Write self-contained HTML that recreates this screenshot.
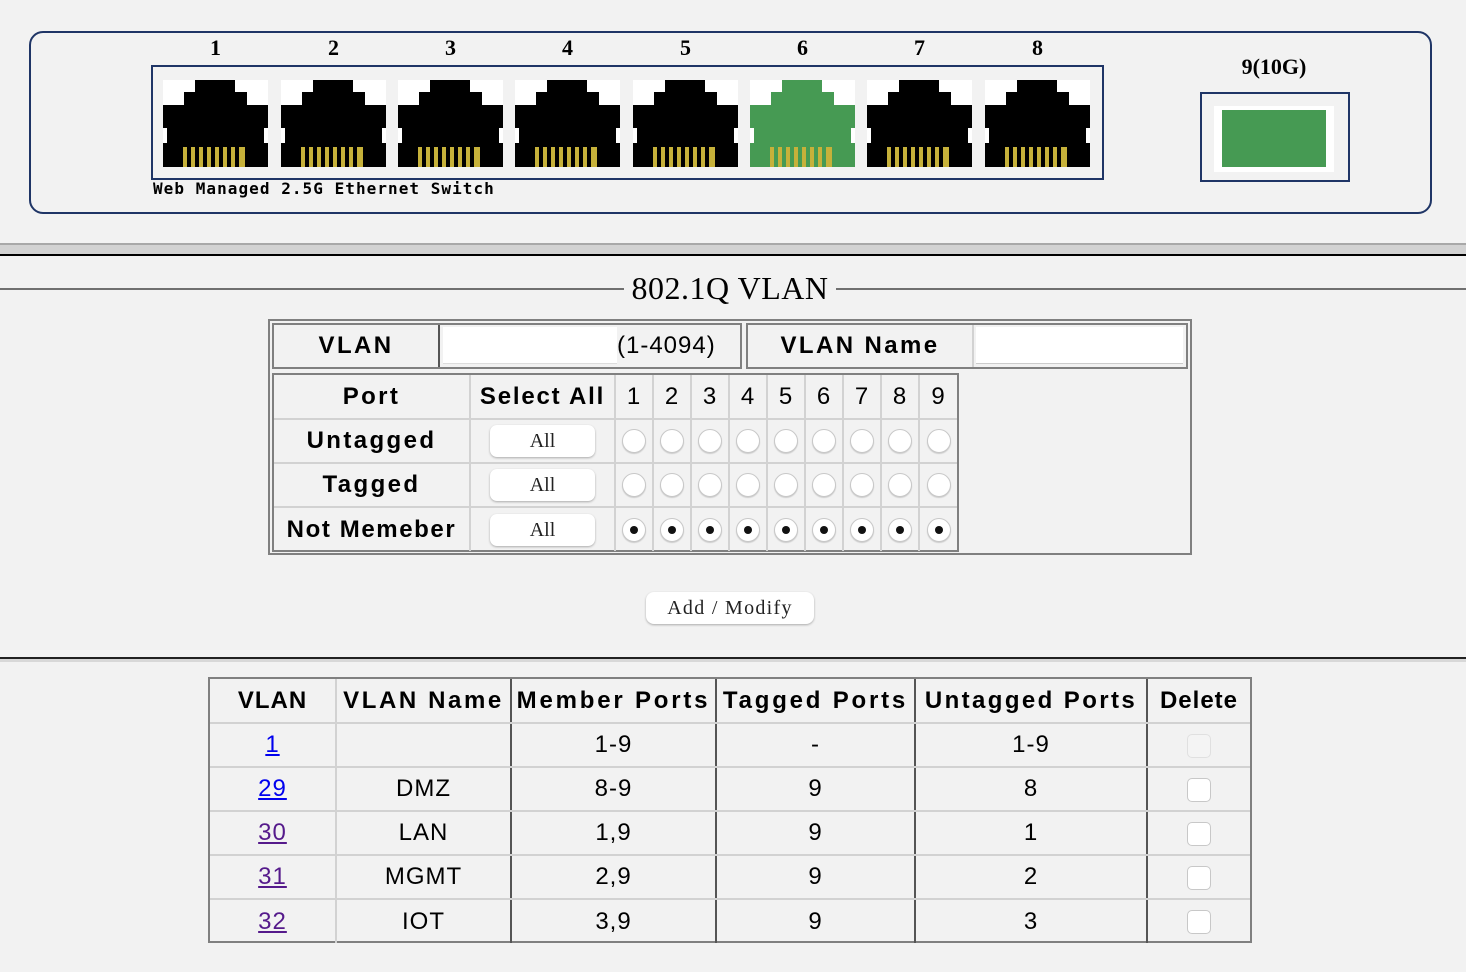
<!DOCTYPE html>
<html><head><meta charset="utf-8"><style>
*{margin:0;padding:0;box-sizing:border-box}
body{width:1466px;height:972px;background:#f2f2f2;position:relative;overflow:hidden;font-family:"Liberation Sans",sans-serif;color:#000}
.a{position:absolute}
.num{position:absolute;top:35px;width:105px;text-align:center;font:bold 22px "Liberation Serif",serif}
.jack{position:absolute;top:80px;width:105px;height:87px}
.b{font-weight:bold;font-size:24px;letter-spacing:2.4px;text-align:center}
.r{font-size:24px;text-align:center;letter-spacing:1px}
table{border-collapse:collapse;table-layout:fixed;border:hidden}
td{text-align:center;padding:0}
.g td{border:2px solid #d2d2d2;height:44px}
.rad{display:inline-block;width:24px;height:24px;border-radius:50%;background:#fff;border:1px solid #c8c8c8;box-shadow:0 1px 1px #ccc;vertical-align:middle;position:relative}
.rad.on::after{content:"";position:absolute;left:7px;top:7px;width:8px;height:8px;border-radius:50%;background:#111}
.btn{display:inline-block;width:105px;height:32px;background:#fff;border-radius:7px;box-shadow:0 1px 2px #aaa;font:20px "Liberation Serif",serif;line-height:32px;color:#222}
.t td{border:2px solid #d2d2d2;height:44px;font-size:24px;letter-spacing:1px}
.t td.dr{border-right:2px solid #555}
a{color:#0000ee}
a.v{color:#551a8b}
.cb{display:inline-block;width:24px;height:24px;border-radius:5px;background:#fff;border:1px solid #c8c8c8;vertical-align:middle}
</style></head><body>
<div class="a" style="left:29px;top:31px;width:1403px;height:183px;border:2px solid #1f3566;border-radius:14px"></div>
<div class="a" style="left:151px;top:65px;width:953px;height:115px;border:2px solid #1f3566"></div>
<svg width="0" height="0" style="position:absolute"><defs>
<g id="pins" fill="#c6b13a"><rect x="20" y="67" width="4" height="20"/><rect x="28" y="67" width="4" height="20"/><rect x="36" y="67" width="4" height="20"/><rect x="44" y="67" width="4" height="20"/><rect x="52" y="67" width="4" height="20"/><rect x="60" y="67" width="4" height="20"/><rect x="68" y="67" width="4" height="20"/><rect x="76" y="67" width="6" height="20"/></g>
</defs></svg>
<div class="num" style="left:163px">1</div><div class="num" style="left:281px">2</div><div class="num" style="left:398px">3</div><div class="num" style="left:515px">4</div><div class="num" style="left:633px">5</div><div class="num" style="left:750px">6</div><div class="num" style="left:867px">7</div><div class="num" style="left:985px">8</div>
<svg class="jack" style="left:163px" viewBox="0 0 105 87"><rect width="105" height="87" fill="#fff"/><path d="M32 0H72V12H84V25H105V48H101V63H105V87H0V63H4V48H0V25H21V12H32Z" fill="#000"/><use href="#pins"/></svg>
<svg class="jack" style="left:281px" viewBox="0 0 105 87"><rect width="105" height="87" fill="#fff"/><path d="M32 0H72V12H84V25H105V48H101V63H105V87H0V63H4V48H0V25H21V12H32Z" fill="#000"/><use href="#pins"/></svg>
<svg class="jack" style="left:398px" viewBox="0 0 105 87"><rect width="105" height="87" fill="#fff"/><path d="M32 0H72V12H84V25H105V48H101V63H105V87H0V63H4V48H0V25H21V12H32Z" fill="#000"/><use href="#pins"/></svg>
<svg class="jack" style="left:515px" viewBox="0 0 105 87"><rect width="105" height="87" fill="#fff"/><path d="M32 0H72V12H84V25H105V48H101V63H105V87H0V63H4V48H0V25H21V12H32Z" fill="#000"/><use href="#pins"/></svg>
<svg class="jack" style="left:633px" viewBox="0 0 105 87"><rect width="105" height="87" fill="#fff"/><path d="M32 0H72V12H84V25H105V48H101V63H105V87H0V63H4V48H0V25H21V12H32Z" fill="#000"/><use href="#pins"/></svg>
<svg class="jack" style="left:750px" viewBox="0 0 105 87"><rect width="105" height="87" fill="#fff"/><path d="M32 0H72V12H84V25H105V48H101V63H105V87H0V63H4V48H0V25H21V12H32Z" fill="#469a53"/><use href="#pins"/></svg>
<svg class="jack" style="left:867px" viewBox="0 0 105 87"><rect width="105" height="87" fill="#fff"/><path d="M32 0H72V12H84V25H105V48H101V63H105V87H0V63H4V48H0V25H21V12H32Z" fill="#000"/><use href="#pins"/></svg>
<svg class="jack" style="left:985px" viewBox="0 0 105 87"><rect width="105" height="87" fill="#fff"/><path d="M32 0H72V12H84V25H105V48H101V63H105V87H0V63H4V48H0V25H21V12H32Z" fill="#000"/><use href="#pins"/></svg>
<div class="a" style="left:153px;top:179px;font:bold 16px 'DejaVu Sans Mono','Liberation Mono',monospace;letter-spacing:1.05px">Web Managed 2.5G Ethernet Switch</div>
<div class="a" style="left:1200px;top:54px;width:148px;text-align:center;font:bold 22px 'Liberation Serif',serif">9(10G)</div>
<div class="a" style="left:1200px;top:92px;width:150px;height:90px;border:2px solid #1f3566"></div>
<div class="a" style="left:1214px;top:106px;width:120px;height:66px;background:#fff"></div>
<div class="a" style="left:1222px;top:110px;width:104px;height:57px;background:#469a53"></div>
<div class="a" style="left:0;top:243px;width:1466px;height:2px;background:#a8a8a8"></div>
<div class="a" style="left:0;top:245px;width:1466px;height:9px;background:#d2d2d2"></div>
<div class="a" style="left:0;top:254px;width:1466px;height:2px;background:#000"></div>
<div class="a" style="left:0;top:288px;width:624px;height:2px;background:#707070"></div>
<div class="a" style="left:836px;top:288px;width:630px;height:2px;background:#707070"></div>
<div class="a" style="left:624px;top:270px;width:212px;text-align:center;font:32px 'Liberation Serif',serif;letter-spacing:0.5px">802.1Q VLAN</div>
<div class="a" style="left:268px;top:319px;width:924px;height:236px;border:2px solid #808080"></div>
<div class="a" style="left:272px;top:323px;width:470px;height:46px;border:2px solid #808080"></div>
<div class="a" style="left:438px;top:325px;width:2px;height:42px;background:#555"></div>
<div class="a b" style="left:274px;top:332px;width:164px">VLAN</div>
<div class="a" style="left:443px;top:327px;width:174px;height:37px;background:#fff;border-bottom:1px solid #ddd"></div>
<div class="a r" style="left:617px;top:332px">(1-4094)</div>
<div class="a" style="left:746px;top:323px;width:442px;height:46px;border:2px solid #808080"></div>
<div class="a" style="left:972px;top:325px;width:2px;height:42px;background:#d2d2d2"></div>
<div class="a b" style="left:748px;top:332px;width:224px">VLAN Name</div>
<div class="a" style="left:976px;top:327px;width:207px;height:37px;background:#fff;border-bottom:1px solid #ccc"></div>
<div class="a" style="left:272px;top:373px;width:687px;height:179px;border:2px solid #808080">
<table class="g" style="width:683px">
<colgroup><col style="width:196px"><col style="width:145px"><col span="9" style="width:38px"></colgroup>
<tr><td class="b" style="height:43px">Port</td><td class="b" style="letter-spacing:1.8px">Select All</td><td class="r">1</td><td class="r">2</td><td class="r">3</td><td class="r">4</td><td class="r">5</td><td class="r">6</td><td class="r">7</td><td class="r">8</td><td class="r">9</td></tr>
<tr><td class="b">Untagged</td><td><span class="btn">All</span></td><td><span class="rad"></span></td><td><span class="rad"></span></td><td><span class="rad"></span></td><td><span class="rad"></span></td><td><span class="rad"></span></td><td><span class="rad"></span></td><td><span class="rad"></span></td><td><span class="rad"></span></td><td><span class="rad"></span></td></tr>
<tr><td class="b">Tagged</td><td><span class="btn">All</span></td><td><span class="rad"></span></td><td><span class="rad"></span></td><td><span class="rad"></span></td><td><span class="rad"></span></td><td><span class="rad"></span></td><td><span class="rad"></span></td><td><span class="rad"></span></td><td><span class="rad"></span></td><td><span class="rad"></span></td></tr>
<tr><td class="b" style="letter-spacing:1.6px">Not Memeber</td><td><span class="btn">All</span></td><td><span class="rad on"></span></td><td><span class="rad on"></span></td><td><span class="rad on"></span></td><td><span class="rad on"></span></td><td><span class="rad on"></span></td><td><span class="rad on"></span></td><td><span class="rad on"></span></td><td><span class="rad on"></span></td><td><span class="rad on"></span></td></tr>
</table></div>
<div class="a" style="left:646px;top:592px;width:168px;height:32px;background:#fff;border-radius:8px;box-shadow:0 1px 2px #aaa;text-align:center;font:20px 'Liberation Serif',serif;line-height:32px;letter-spacing:1.3px;color:#222">Add / Modify</div>
<div class="a" style="left:0;top:657px;width:1466px;height:2px;background:#222"></div>
<div class="a" style="left:0;top:659px;width:1466px;height:3px;background:#d8d8d8"></div>
<div class="a" style="left:208px;top:677px;width:1044px;height:266px;border:2px solid #808080">
<table class="t" style="width:1040px">
<colgroup><col style="width:126px"><col style="width:175px"><col style="width:205px"><col style="width:199px"><col style="width:232px"><col style="width:103px"></colgroup>
<tr><td class="b">VLAN</td><td class="b dr" style="letter-spacing:2.6px">VLAN Name</td><td class="b dr" style="letter-spacing:2.8px">Member Ports</td><td class="b dr" style="letter-spacing:2.8px">Tagged Ports</td><td class="b dr" style="letter-spacing:2.4px">Untagged Ports</td><td class="b">Delete</td></tr>
<tr><td><a href="#">1</a></td><td class="dr"></td><td class="dr">1-9</td><td class="dr">-</td><td class="dr">1-9</td><td><span class="cb" style="background:#f4f4f4;border-color:#e0e0e0"></span></td></tr>
<tr><td><a href="#">29</a></td><td class="dr">DMZ</td><td class="dr">8-9</td><td class="dr">9</td><td class="dr">8</td><td><span class="cb"></span></td></tr>
<tr><td><a class="v" href="#">30</a></td><td class="dr">LAN</td><td class="dr">1,9</td><td class="dr">9</td><td class="dr">1</td><td><span class="cb"></span></td></tr>
<tr><td><a class="v" href="#">31</a></td><td class="dr">MGMT</td><td class="dr">2,9</td><td class="dr">9</td><td class="dr">2</td><td><span class="cb"></span></td></tr>
<tr><td><a class="v" href="#">32</a></td><td class="dr">IOT</td><td class="dr">3,9</td><td class="dr">9</td><td class="dr">3</td><td><span class="cb"></span></td></tr>
</table></div>
</body></html>
